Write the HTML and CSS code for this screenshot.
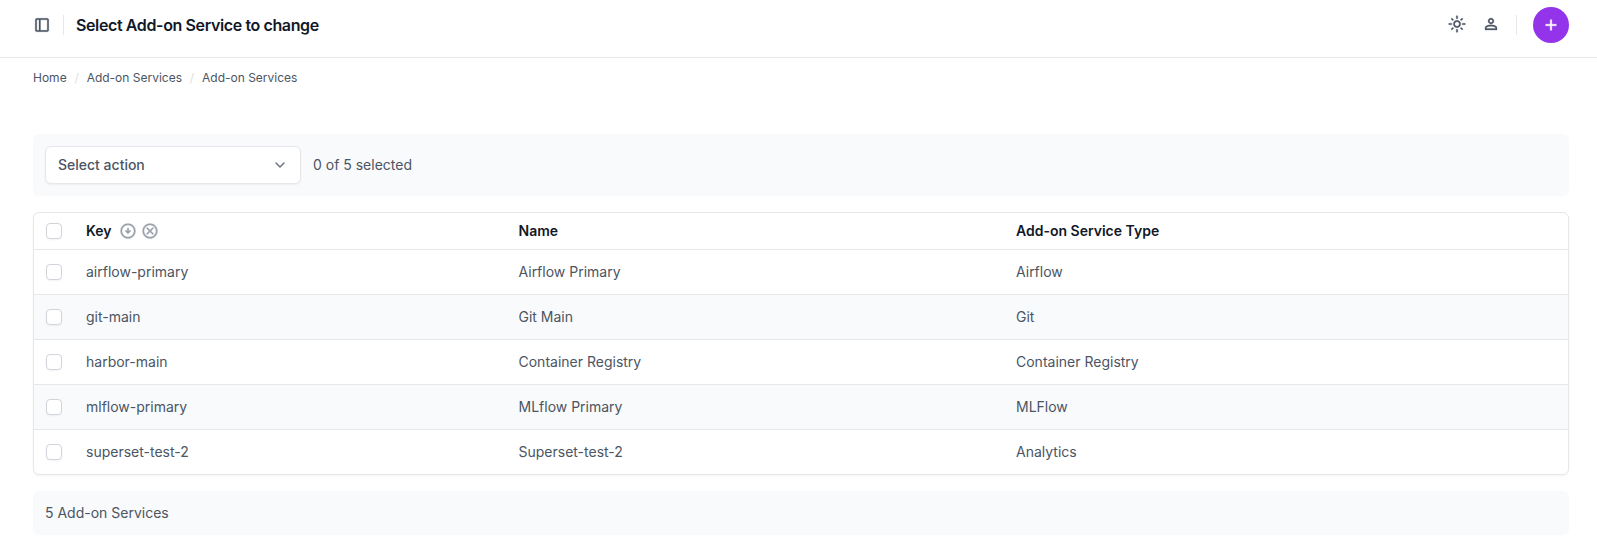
FILE: index.html
```html
<!DOCTYPE html>
<html lang="en">
<head>
<meta charset="utf-8">
<title>Select Add-on Service to change</title>
<link rel="stylesheet" href="styles.css">
</head>
<body>
<header class="header">
  <svg class="icon" viewBox="0 -960 960 960"><path d="M200-120q-33 0-56.500-23.500T120-200v-560q0-33 23.500-56.500T200-840h560q33 0 56.500 23.500T840-760v560q0 33-23.500 56.500T760-120H200Zm120-80v-560H200v560h120Zm80 0h360v-560H400v560Z"/></svg>
  <span class="divider divider-left"></span>
  <h1 class="title">Select Add-on Service to change</h1>
  <div class="tools">
    <svg class="icon" viewBox="0 -960 960 960"><path d="M480-360q50 0 85-35t35-85-35-85-85-35-85 35-35 85 35 85 85 35Zm0 80q-83 0-141.500-58.500T280-480t58.500-141.500T480-680t141.500 58.500T680-480t-58.500 141.500T480-280ZM200-440H40v-80h160v80Zm720 0H760v-80h160v80ZM440-760v-160h80v160h-80Zm0 720v-160h80v160h-80ZM256-650l-101-97 57-59 96 100-52 56Zm492 496-97-101 53-55 101 97-57 59Zm-98-550 97-101 59 57-100 96-56-52ZM154-212l101-97 55 53-97 101-59-57Z"/></svg>
    <svg class="icon" viewBox="0 -960 960 960"><path d="M480-480q-66 0-113-47t-47-113 47-113 113-47 113 47 47 113-47 113-113 47ZM160-160v-112q0-34 17.500-62.500T224-378q62-31 126-46.500T480-440t130 15.500T736-378q29 15 46.500 43.500T800-272v112H160Zm80-80h480v-32q0-11-5.500-20T700-306q-54-27-109-40.500T480-360t-111 13.500T260-306q-9 5-14.500 14t-5.500 20v32Zm240-320q33 0 56.500-23.500T560-640t-23.500-56.500T480-720t-56.500 23.500T400-640t23.500 56.500T480-560Z"/></svg>
  </div>
  <span class="divider"></span>
  <a class="add" aria-label="Add"><svg class="icon" viewBox="0 -960 960 960"><path d="M440-440H200v-80h240v-240h80v240h240v80H520v240h-80v-240Z"/></svg></a>
</header>
<main class="main">
  <nav class="crumbs"><a>Home</a><span class="slash">/</span><a>Add-on Services</a><span class="slash">/</span><a>Add-on Services</a></nav>
  <div class="actions">
    <div class="select"><span>Select action</span><svg class="chevron" viewBox="0 0 20 20"><path d="M6 8l4 4 4-4"/></svg></div>
    <span>0 of 5 selected</span>
  </div>
  <div class="table">
    <div class="row head">
      <span class="check"></span>
      <span class="key">Key
        <svg class="icon sort" viewBox="0 -960 960 960"><path d="m480-320 160-160-56-56-64 64v-168h-80v168l-64-64-56 56 160 160Zm0 240q-83 0-156-31.500T197-197q-54-54-85.500-127T80-480q0-83 31.500-156T197-763q54-54 127-85.500T480-880q83 0 156 31.500T763-763q54 54 85.500 127T880-480q0 83-31.500 156T763-197q-54 54-127 85.500T480-80Zm0-80q134 0 227-93t93-227q0-134-93-227t-227-93q-134 0-227 93t-93 227q0 134 93 227t227 93Z"/></svg>
        <svg class="icon" viewBox="0 -960 960 960"><path d="m336-280 144-144 144 144 56-56-144-144 144-144-56-56-144 144-144-144-56 56 144 144-144 144 56 56ZM480-80q-83 0-156-31.500T197-197q-54-54-85.500-127T80-480q0-83 31.500-156T197-763q54-54 127-85.500T480-880q83 0 156 31.500T763-763q54 54 85.500 127T880-480q0 83-31.500 156T763-197q-54 54-127 85.500T480-80Zm0-80q134 0 227-93t93-227q0-134-93-227t-227-93q-134 0-227 93t-93 227q0 134 93 227t227 93Z"/></svg>
      </span>
      <span>Name</span><span>Add-on Service Type</span>
    </div>
    <div class="row"><span class="check"></span><span>airflow-primary</span><span>Airflow Primary</span><span>Airflow</span></div>
    <div class="row"><span class="check"></span><span>git-main</span><span>Git Main</span><span>Git</span></div>
    <div class="row"><span class="check"></span><span>harbor-main</span><span>Container Registry</span><span>Container Registry</span></div>
    <div class="row"><span class="check"></span><span>mlflow-primary</span><span>MLflow Primary</span><span>MLFlow</span></div>
    <div class="row"><span class="check"></span><span>superset-test-2</span><span>Superset-test-2</span><span>Analytics</span></div>
  </div>
  <div class="count">5 Add-on Services</div>
</main>
</body>
</html>
```
FILE: styles.css
```css
* { box-sizing: border-box; }
body {
  margin: 0;
  height: 542px;
  overflow: hidden;
  background: #fff;
  color: #4b5563;
  font: 14px/20px Inter, sans-serif;
}
.icon {
  display: block;
  width: 18px;
  height: 18px;
  fill: currentColor;
  stroke: currentColor;
  stroke-width: 14;
  flex: none;
}
.header {
  display: flex;
  align-items: center;
  height: 58px;
  padding: 0 28px 8px 33px;
  border-bottom: 1px solid #e5e7eb;
}
.divider { width: 1px; height: 20px; background: #e5e7eb; }
.divider-left { margin: 0 12px; }
.title {
  margin: 0;
  color: #111827;
  font-size: 16px;
  line-height: 24px;
  font-weight: 600;
  letter-spacing: -0.38px;
}
.tools { display: flex; gap: 16px; margin: 0 16px 2px auto; }
.add {
  display: flex;
  align-items: center;
  justify-content: center;
  width: 36px;
  height: 36px;
  margin-left: 16px;
  border-radius: 50%;
  background: #9333ea;
  color: #fff;
}
.add .icon { stroke-width: 24; }
.main { padding: 0 28px 0 33px; }
.crumbs { display: flex; padding-top: 10px; font-size: 12px; }
.slash { width: 20px; text-align: center; color: #dcdfe4; }
.actions {
  display: flex;
  align-items: center;
  gap: 12px;
  height: 62px;
  margin-top: 46px;
  padding: 12px;
  border-radius: 6px;
  background: #f9fafb;
}
.select {
  display: flex;
  align-items: center;
  justify-content: space-between;
  width: 256px;
  height: 38px;
  padding: 0 10px 0 12px;
  border: 1px solid #e5e7eb;
  border-radius: 6px;
  background: #fff;
  box-shadow: 0 1px 2px rgba(0, 0, 0, .05);
  font-weight: 500;
}
.chevron { width: 20px; height: 20px; fill: none; stroke: #6b7280; stroke-width: 1.5; stroke-linecap: round; stroke-linejoin: round; }
.table {
  margin-top: 16px;
  border: 1px solid #e5e7eb;
  border-radius: 6px;
  overflow: hidden;
  box-shadow: 0 1px 2px rgba(0, 0, 0, .05);
}
.row {
  display: grid;
  grid-template-columns: 40px 432.5px 497.5px 1fr;
  align-items: center;
  height: 45px;
  padding-left: 12px;
  border-top: 1px solid #e5e7eb;
}
.row:nth-child(odd):not(.head) { background: #f9fafb; }
.head { height: 36px; border-top: 0; color: #111827; font-weight: 600; }
.key { display: flex; align-items: center; }
.key .icon { color: #9ca3af; }
.key .sort { margin: 0 4px 0 7px; }
.check {
  width: 16px;
  height: 16px;
  border: 1px solid #d1d5db;
  border-radius: 4px;
  background: #fff;
  box-shadow: 0 1px 2px rgba(0, 0, 0, .05);
}
.count {
  height: 44px;
  margin-top: 16px;
  padding: 12px;
  border-radius: 6px;
  background: #f9fafb;
}
```
